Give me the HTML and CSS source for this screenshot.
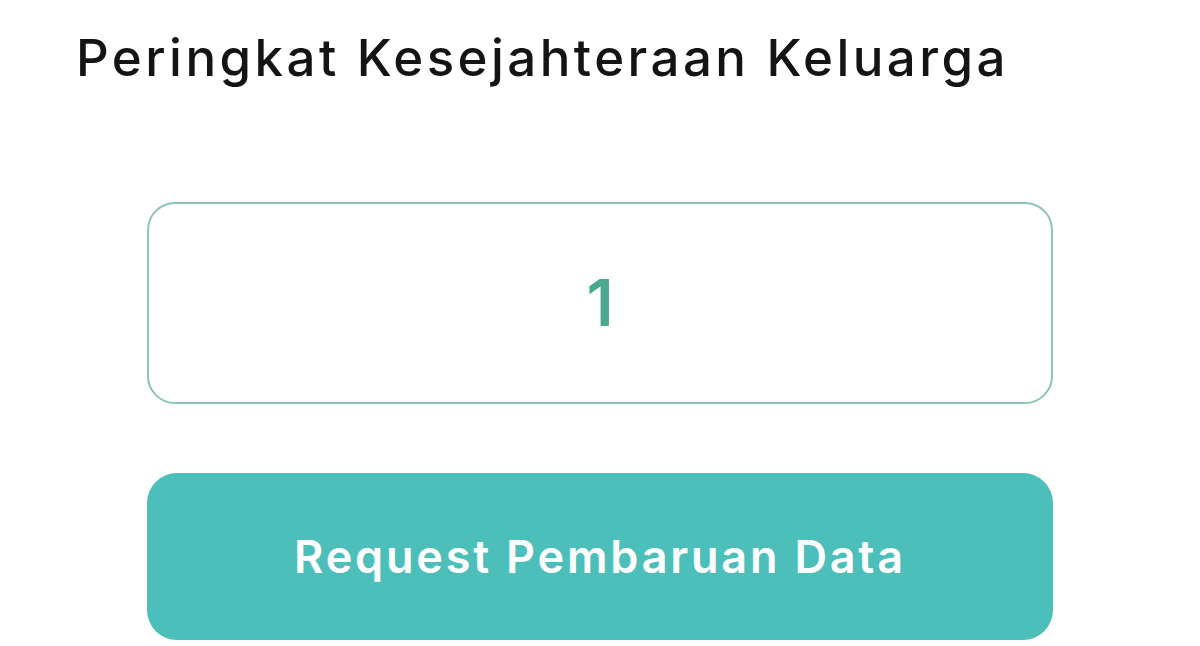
FILE: index.html
```html
<!DOCTYPE html>
<html lang="id">
<head>
<meta charset="utf-8">
<title>Peringkat Kesejahteraan Keluarga</title>
<link rel="stylesheet" href="styles.css">
</head>
<body>
<main class="page">
  <h1 class="title">Peringkat Kesejahteraan Keluarga</h1>
  <section class="panel">
    <div class="rank-box"><span class="rank-value">1</span></div>
    <button class="request-btn" type="button">Request Pembaruan Data</button>
  </section>
</main>
</body>
</html>
```

FILE: styles.css
```css
html, body {
  margin: 0;
  padding: 0;
  background: #ffffff;
}
.page {
  width: 1200px;
  height: 646px;
  overflow: hidden;
  font-family: Inter, "Noto Sans", sans-serif;
  padding: 32px 0 0 76px;
  box-sizing: border-box;
}
.title {
  margin: 0;
  font-size: 51px;
  line-height: 1;
  font-weight: 500;
  color: #141414;
  letter-spacing: 3.45px;
  white-space: nowrap;
}
.panel {
  margin: 119px 0 0 71px;
  width: 906px;
  display: flex;
  flex-direction: column;
  gap: 69px;
}
.rank-box {
  height: 202px;
  box-sizing: border-box;
  border: 2px solid #8dc3b8;
  border-radius: 28px;
  display: flex;
  align-items: center;
  justify-content: center;
}
.rank-value {
  font-size: 64px;
  line-height: 1;
  font-weight: 600;
  color: #4aa88f;
}
.request-btn {
  height: 167px;
  border: none;
  border-radius: 30px;
  background: #4dbfba;
  color: #ffffff;
  font-family: Inter, "Noto Sans", sans-serif;
  font-size: 45px;
  font-weight: 600;
  letter-spacing: 2.8px;
  padding: 0;
  cursor: pointer;
}
```
